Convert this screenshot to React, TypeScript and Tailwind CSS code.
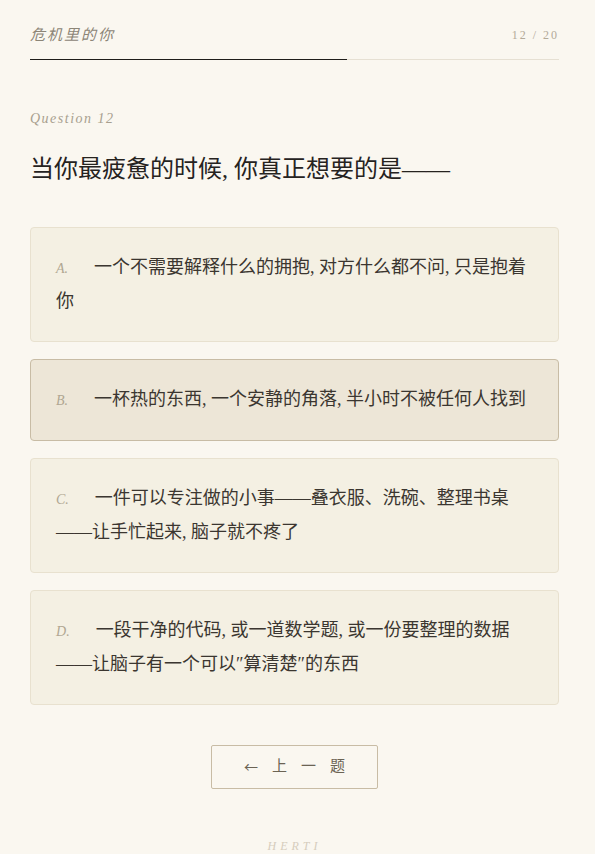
import React from "react"

interface Option {
  key: string
  text: string
}

const options: Option[] = [
  { key: "A", text: "一个不需要解释什么的拥抱, 对方什么都不问, 只是抱着你" },
  { key: "B", text: "一杯热的东西, 一个安静的角落, 半小时不被任何人找到" },
  { key: "C", text: "一件可以专注做的小事——叠衣服、洗碗、整理书桌——让手忙起来, 脑子就不疼了" },
  { key: "D", text: "一段干净的代码, 或一道数学题, 或一份要整理的数据——让脑子有一个可以″算清楚″的东西" },
]

const serif = { fontFamily: '"Liberation Serif", "Noto Sans CJK SC", serif' }

export default function App() {
  const selected = "B"
  const current = 12
  const total = 20

  return (
    <div className="min-h-screen bg-[#faf7f0] pl-[30px] pr-[36px]" style={serif}>
      {/* Header */}
      <div className="flex items-center justify-between pt-[24px] pb-[12px]">
        <span className="text-[15px] italic tracking-[2px] text-[#8c8577]">危机里的你</span>
        <span className="text-[12px] tracking-[2px] text-[#b3aa99]">
          {current} / {total}
        </span>
      </div>
      <div className="h-px bg-[#e6e0d3]">
        <div className="h-[1.5px] bg-[#1f1d1a]" style={{ width: `${(current / total) * 100}%` }} />
      </div>

      {/* Question */}
      <div className="pt-[48px] text-[14px] italic tracking-[1.5px] text-[#a89f8f]">Question {current}</div>
      <h1 className="mt-[24px] text-[24px] leading-[32px] text-[#26231f]">当你最疲惫的时候, 你真正想要的是——</h1>

      {/* Options */}
      <div className="mt-[42px] flex flex-col gap-[17px]">
        {options.map((o) => (
          <div
            key={o.key}
            className={`rounded-[4px] border px-[25px] py-[23px] text-[18px] leading-[33px] text-[#3b3630] ${
              o.key === selected ? "border-[#c8bca5] bg-[#ede6d7]" : "border-[#e8e1cf] bg-[#f4f0e3]"
            }`}
          >
            <span className="mr-[26px] text-[14px] italic text-[#b0a792]">{o.key}.</span>
            {o.text}
          </div>
        ))}
      </div>

      {/* Prev button */}
      <div className="mt-[40px] flex justify-center">
        <button className="flex h-[44px] w-[167px] items-center justify-center gap-[14px] rounded-[2px] border border-[#c8bca5] text-[15px] text-[#6b6354]">
          <span className="text-[14px]" style={{ fontFamily: '"Noto Sans CJK SC", sans-serif' }}>←</span>
          <span>上</span>
          <span>一</span>
          <span>题</span>
        </button>
      </div>

      {/* Footer */}
      <div className="mt-[48px] pb-[6px] text-center text-[12px] italic tracking-[4px] text-[#d6cdbd]">HERTI</div>
    </div>
  )
}
